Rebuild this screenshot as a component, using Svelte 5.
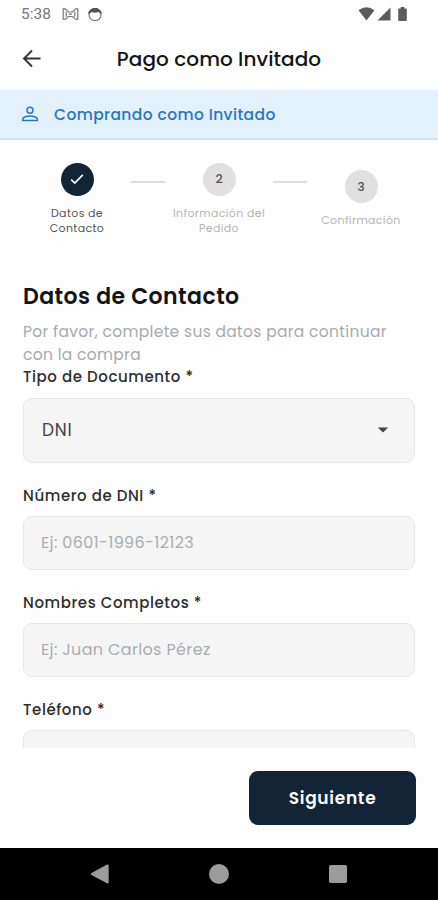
<script>
    const steps = [
        { number: 1, label: ['Datos de', 'Contacto'], active: true },
        { number: 2, label: ['Información del', 'Pedido'], active: false },
        { number: 3, label: ['Confirmación'], active: false }
    ];

    const fields = [
        { id: 'dni', label: 'Número de DNI *', placeholder: 'Ej: 0601-1996-12123' },
        { id: 'nombres', label: 'Nombres Completos *', placeholder: 'Ej: Juan Carlos Pérez' },
        { id: 'telefono', label: 'Teléfono *', placeholder: '' }
    ];
</script>

<div class="screen">
    <div class="status-bar">
        <span class="clock">5:38</span>
        <svg class="cat" width="17" height="14" viewBox="0 0 17 14">
            <path d="M1.2 12.2 V1.8 H3.5 L6.5 5 H10.5 L13.5 1.8 H15.8 V12.2 H13.5 L10.5 9.5 H6.5 L3.5 12.2 Z M4.2 4.5 V9.8 M12.8 4.5 V9.8 M7 7.2 H10" />
        </svg>
        <svg class="face" width="16" height="15" viewBox="0 0 16 15">
            <circle cx="8" cy="7.7" r="6" fill="none" stroke="#777" stroke-width="1.2" />
            <path d="M1 6.5 C2.5 -1 13.5 -1 15 6.5 L13 6.5 L11.5 5 L8 5.8 L4.5 5 L3 6.5 Z" fill="#555" />
        </svg>
        <div class="system">
            <svg width="17" height="14" viewBox="0 0 17 14"><path d="M0.5 3.2 Q8.5 -2.8 16.5 3.2 L8.5 13.5 Z" /></svg>
            <svg width="14" height="14" viewBox="0 0 14 14"><path d="M0.5 13.5 L13.5 0.5 V13.5 Z" /></svg>
            <svg class="battery" width="9" height="14" viewBox="0 0 9 14"><path d="M2.7 0 H6.3 V1.5 H8 Q8.8 1.5 8.8 2.4 V13 Q8.8 14 8 14 H1 Q0.2 14 0.2 13 V2.4 Q0.2 1.5 1 1.5 H2.7 Z" /></svg>
        </div>
    </div>

    <header>
        <svg width="20" height="20" viewBox="0 0 20 20">
            <path d="M18.5 9.5 H2.5 M10 1.5 L2 9.5 L10 17.5" />
        </svg>
        <h1>Pago como Invitado</h1>
    </header>

    <div class="banner">
        <svg width="18" height="18" viewBox="0 0 18 18">
            <circle cx="9" cy="5.2" r="3" />
            <path d="M1.7 15.6 V14.3 C1.7 12 6 11 9 11 C12 11 16.3 12 16.3 14.3 V15.6 Z" />
        </svg>
        <span>Comprando como Invitado</span>
    </div>

    <div class="stepper">
        {#each steps as step, i}
            {#if i > 0}
                <div class="line"></div>
            {/if}
            <div class="step" class:active={step.active}>
                <div class="circle">
                    {#if step.active}
                        <svg width="16" height="16" viewBox="0 0 16 16"><path d="M2.2 8.6 L5.8 12 L13.8 3.8" /></svg>
                    {:else}
                        {step.number}
                    {/if}
                </div>
                <div class="step-label">
                    {#each step.label as text}
                        <span>{text}</span>
                    {/each}
                </div>
            </div>
        {/each}
    </div>

    <main>
        <h2>Datos de Contacto</h2>
        <p>Por favor, complete sus datos para continuar<br />con la compra</p>
        <div class="label tipo">Tipo de Documento *</div>
        <div class="select">
            <span>DNI</span>
            <svg width="12" height="6" viewBox="0 0 12 6"><path d="M0.8 0.4 H11.2 L6 5.6 Z" /></svg>
        </div>
        {#each fields as field}
            <label class="label" for={field.id}>{field.label}</label>
            <input id={field.id} type="text" placeholder={field.placeholder} />
        {/each}
    </main>

    <footer>
        <button type="button">Siguiente</button>
    </footer>

    <nav>
        <svg width="20" height="20" viewBox="0 0 20 20"><path d="M1.5 9 L17 0.6 Q18.7 0 18.7 1.8 V18.2 Q18.7 20 17 19.3 L1.5 11 Q0.2 10 1.5 9 Z" /></svg>
        <svg width="20" height="20" viewBox="0 0 20 20"><circle cx="10" cy="10" r="10" /></svg>
        <svg width="20" height="20" viewBox="0 0 20 20"><rect x="1" y="1" width="18" height="18" rx="1.8" /></svg>
    </nav>
</div>

<style>
    :global(body) {
        margin: 0;
        background: #fefefe;
    }

    .screen {
        display: flex;
        flex-direction: column;
        width: 438px;
        height: 900px;
        overflow: hidden;
        background: #fefefe;
        font-family: Poppins, Inter, sans-serif;
        color: #141414;
    }

    .status-bar {
        display: flex;
        align-items: center;
        flex: none;
        box-sizing: border-box;
        height: 28px;
        padding: 0 31px 0 21px;
    }

    .clock {
        width: 41px;
        font-family: Roboto, sans-serif;
        font-size: 15.5px;
        color: #777;
    }

    .cat {
        fill: none;
        stroke: #777;
        stroke-width: 1.2;
    }

    .face {
        margin-left: 8px;
    }

    .system {
        display: flex;
        gap: 2px;
        margin-left: auto;
        fill: #5c5c5c;
    }

    .battery {
        margin-left: 5px;
    }

    header {
        display: grid;
        grid-template-columns: 20px 1fr 20px;
        align-items: center;
        flex: none;
        height: 62px;
        padding: 0 22px;
    }

    header svg {
        fill: none;
        stroke: #333;
        stroke-width: 1.9;
    }

    h1 {
        margin: 0;
        font-size: 20px;
        font-weight: 500;
        letter-spacing: 0.08px;
        text-align: center;
        white-space: nowrap;
    }

    .banner {
        display: flex;
        align-items: center;
        gap: 15px;
        flex: none;
        box-sizing: border-box;
        height: 50px;
        padding: 0 21px;
        border-bottom: 2px solid #c9e3fa;
        background: #e3f1fd;
        color: #2674cc;
        font-size: 15.5px;
        font-weight: 500;
        letter-spacing: 0.4px;
    }

    .banner svg {
        fill: none;
        stroke: #2674cc;
        stroke-width: 1.5;
    }

    .stepper {
        display: flex;
        align-items: center;
        justify-content: center;
        flex: none;
        height: 118px;
    }

    .step {
        display: flex;
        flex-direction: column;
        align-items: center;
        gap: 10px;
        width: 108px;
        color: #b4b4b4;
    }

    .step.active {
        color: #555;
    }

    .circle {
        display: flex;
        align-items: center;
        justify-content: center;
        width: 33px;
        height: 33px;
        border-radius: 50%;
        background: #e0e0e0;
        color: #555;
        font-size: 12.5px;
        font-weight: 500;
    }

    .active .circle {
        background: #112536;
    }

    .circle svg {
        fill: none;
        stroke: #fff;
        stroke-width: 1.7;
    }

    .step-label {
        display: flex;
        flex-direction: column;
        align-items: center;
        font-size: 11px;
        line-height: 15px;
        letter-spacing: 0.35px;
        white-space: nowrap;
    }

    .line {
        width: 34px;
        height: 2px;
        margin-bottom: 34px;
        background: #dedede;
    }

    main {
        display: flex;
        flex-direction: column;
        box-sizing: border-box;
        height: 490px;
        padding: 25px 23px 0;
        overflow: hidden;
        flex: none;
    }

    h2 {
        flex: none;
        margin: 0;
        font-size: 22px;
        font-weight: 600;
        line-height: 27px;
        letter-spacing: 0.45px;
    }

    p {
        flex: none;
        margin: 11px 0 0;
        font-size: 15.5px;
        line-height: 22.5px;
        letter-spacing: 0.32px;
        white-space: nowrap;
        color: #a6abae;
    }

    .label {
        flex: none;
        height: 22px;
        margin: 22px 0 9px;
        font-size: 15px;
        font-weight: 500;
        line-height: 22px;
        letter-spacing: 0.58px;
        color: #2e2e2e;
    }

    .tipo {
        margin: 0 0 10px;
    }

    .select,
    input {
        flex: none;
        box-sizing: border-box;
        width: 100%;
        border: 1px solid #e6e6e6;
        border-radius: 9px;
        background: #f5f5f5;
        font-family: inherit;
        font-size: 16px;
        color: #444;
    }

    .select {
        display: flex;
        align-items: center;
        justify-content: space-between;
        height: 65px;
        padding: 0 25px 1px 18px;
        font-size: 17px;
        letter-spacing: 0.8px;
    }

    .select svg {
        fill: #444;
    }

    input {
        height: 54px;
        margin: 0;
        padding: 0 17px 1px;
        letter-spacing: 0.35px;
    }

    input::placeholder {
        color: #a9adaf;
        opacity: 1;
    }

    footer {
        display: flex;
        align-items: center;
        justify-content: flex-end;
        flex: none;
        height: 100px;
        padding: 0 22px;
    }

    button {
        width: 167px;
        height: 54px;
        padding: 0;
        border: 0;
        border-radius: 9px;
        background: #112536;
        color: #fff;
        font-family: inherit;
        font-size: 17px;
        font-weight: 600;
        letter-spacing: 0.7px;
    }

    nav {
        display: flex;
        align-items: center;
        justify-content: center;
        gap: 99px;
        flex: none;
        height: 52px;
        background: #000;
        fill: #9c9c9c;
    }
</style>
